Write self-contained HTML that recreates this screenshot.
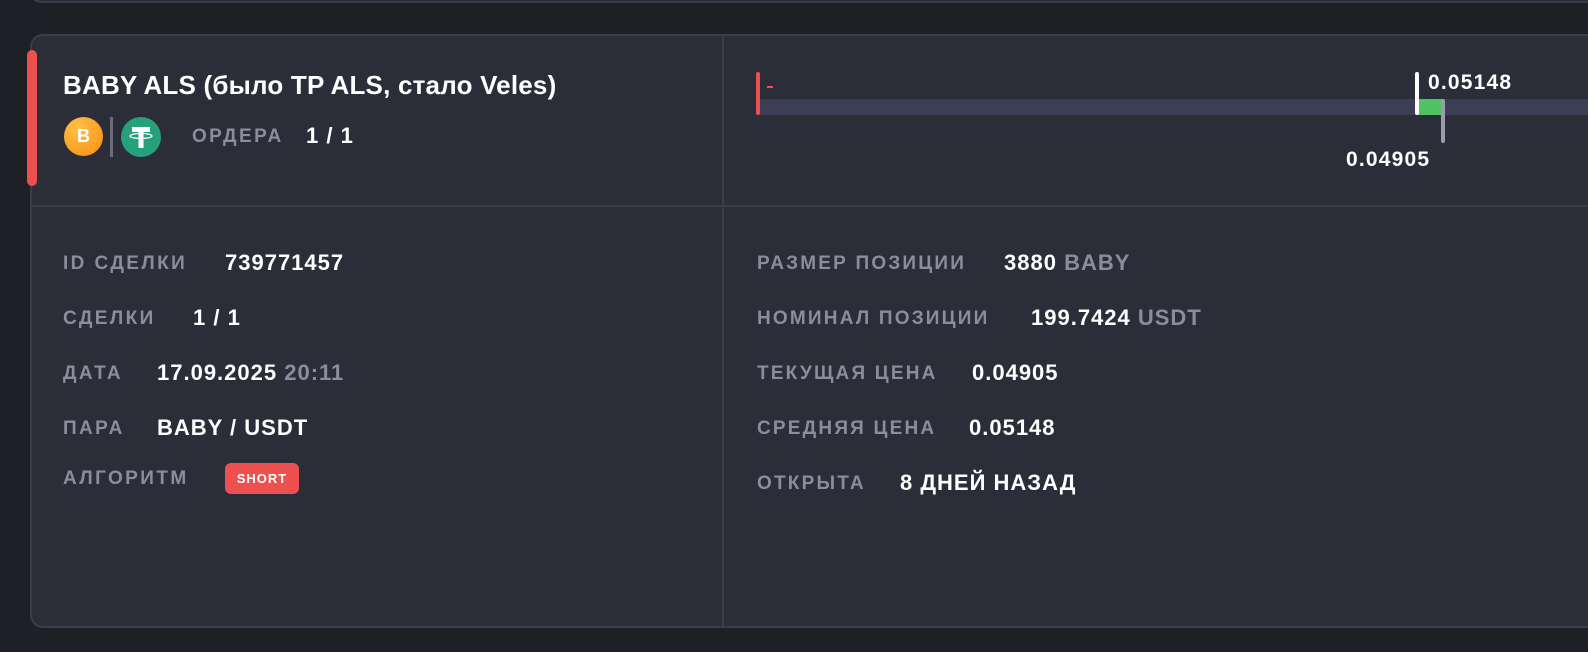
<!DOCTYPE html>
<html><head><meta charset="utf-8"><style>
*{margin:0;padding:0;box-sizing:border-box}
body{width:1588px;height:652px;background:#1f2025;position:relative;overflow:hidden;font-family:"Liberation Sans",sans-serif;color:#fff}
.top{position:absolute;left:30px;top:-20px;width:1600px;height:23px;border:2px solid #3a3c47;border-radius:12px;background:#2a2c37}
.card{position:absolute;left:30px;top:34px;width:1600px;height:594px;background:#2b2d39;border:2px solid #3a3c48;border-radius:13px}
.abs{position:absolute}
.lab{position:absolute;color:#8c8d9c;font-weight:bold;font-size:19px;letter-spacing:2.4px;line-height:20px;white-space:nowrap;margin-top:3px}
.val{position:absolute;color:#fff;font-weight:bold;font-size:22px;letter-spacing:1px;line-height:22px;white-space:nowrap}
.dim{color:#8c8d9c}
</style></head><body>
<div class="top"></div>
<div class="card"></div>
<div class="abs" style="left:27px;top:50px;width:10px;height:136px;background:#ee5050;border-radius:5px"></div>
<div class="abs" style="left:722px;top:36px;width:2px;height:590px;background:#3a3c48"></div>
<div class="abs" style="left:32px;top:205px;width:1556px;height:2px;background:#3a3c48"></div>
<div class="abs" style="left:63px;top:70px;font-size:26px;font-weight:bold;line-height:30px;white-space:nowrap;letter-spacing:.2px">BABY ALS (было TP ALS, стало Veles)</div>
<div class="abs" style="left:64px;top:117px;width:39px;height:39px;border-radius:50%;background:radial-gradient(circle at 35% 30%,#ffc247,#f78b10);color:#fff;font-weight:bold;font-size:18px;text-align:center;line-height:39px">B</div>
<div class="abs" style="left:110px;top:117px;width:3px;height:40px;background:#6a6c78"></div>
<div class="abs" style="left:121px;top:117px;width:40px;height:40px;border-radius:50%;background:#26a17b">
<svg width="40" height="40" viewBox="0 0 40 40"><rect x="11" y="10" width="18" height="5" fill="#fff"/><rect x="17.5" y="10" width="5" height="21" fill="#fff"/><ellipse cx="20" cy="19" rx="11" ry="2.5" fill="none" stroke="#fff" stroke-width="1.2"/></svg></div>
<div class="lab" style="left:192px;top:124px">ОРДЕРА</div>
<div class="val" style="left:306px;top:125px">1 / 1</div>

<div class="lab" style="left:63px;top:251px">ID СДЕЛКИ</div><div class="val" style="left:225px;top:252px">739771457</div>
<div class="lab" style="left:63px;top:306px">СДЕЛКИ</div><div class="val" style="left:193px;top:307px">1 / 1</div>
<div class="lab" style="left:63px;top:361px">ДАТА</div><div class="val" style="left:157px;top:362px">17.09.2025 <span class="dim">20:11</span></div>
<div class="lab" style="left:63px;top:416px">ПАРА</div><div class="val" style="left:157px;top:417px">BABY / USDT</div>
<div class="lab" style="left:63px;top:466px">АЛГОРИТМ</div>
<div class="abs" style="left:225px;top:463px;width:74px;height:31px;background:#ee5050;border-radius:6px;font-size:13px;font-weight:bold;letter-spacing:1px;text-align:center;line-height:31px">SHORT</div>

<div class="lab" style="left:757px;top:251px;letter-spacing:2.2px">РАЗМЕР ПОЗИЦИИ</div><div class="val" style="left:1004px;top:252px">3880 <span class="dim">BABY</span></div>
<div class="lab" style="left:757px;top:306px;letter-spacing:2.2px">НОМИНАЛ ПОЗИЦИИ</div><div class="val" style="left:1031px;top:307px">199.7424 <span class="dim">USDT</span></div>
<div class="lab" style="left:757px;top:361px;letter-spacing:2.2px">ТЕКУЩАЯ ЦЕНА</div><div class="val" style="left:972px;top:362px">0.04905</div>
<div class="lab" style="left:757px;top:416px;letter-spacing:2.2px">СРЕДНЯЯ ЦЕНА</div><div class="val" style="left:969px;top:417px">0.05148</div>
<div class="lab" style="left:757px;top:471px;letter-spacing:2.2px">ОТКРЫТА</div><div class="val" style="left:900px;top:472px">8 ДНЕЙ НАЗАД</div>

<div class="abs" style="left:757px;top:99px;width:831px;height:16px;background:#3a3f55"></div>
<div class="abs" style="left:756px;top:72px;width:4px;height:43px;background:#ee5050;border-radius:2px"></div>
<div class="abs" style="left:767px;top:86px;width:6px;height:2px;background:#ee5050"></div>
<div class="abs" style="left:1418px;top:99px;width:25px;height:16px;background:#4fc266"></div>
<div class="abs" style="left:1415px;top:72px;width:4px;height:43px;background:#fff;border-radius:2px"></div>
<div class="abs" style="left:1441px;top:99px;width:4px;height:44px;background:#9a9bab;border-radius:2px"></div>
<div class="val" style="left:1428px;top:72px;font-size:21px;letter-spacing:1.2px">0.05148</div>
<div class="val" style="left:1346px;top:149px;font-size:21px;letter-spacing:1.2px">0.04905</div>
</body></html>
